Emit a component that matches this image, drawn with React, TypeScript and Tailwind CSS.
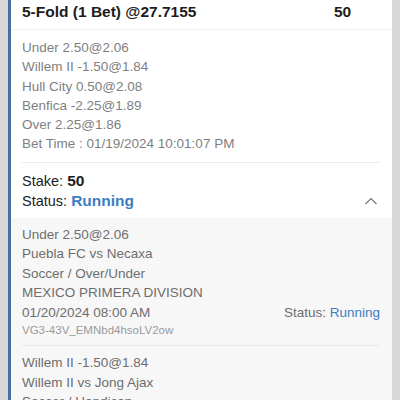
const summary = [
  "Under 2.50@2.06",
  "Willem II -1.50@1.84",
  "Hull City 0.50@2.08",
  "Benfica -2.25@1.89",
  "Over 2.25@1.86",
  "Bet Time : 01/19/2024 10:01:07 PM",
];

const legs = [
  {
    pick: "Under 2.50@2.06",
    match: "Puebla FC vs Necaxa",
    market: "Soccer / Over/Under",
    league: "MEXICO PRIMERA DIVISION",
    time: "01/20/2024 08:00 AM",
    id: "VG3-43V_EMNbd4hsoLV2ow",
  },
  {
    pick: "Willem II -1.50@1.84",
    match: "Willem II vs Jong Ajax",
    market: "Soccer / Handicap",
    league: "NETHERLANDS EERSTE DIVISIE",
    time: "01/19/2024 08:00 PM",
    id: "VG3-43V_EMNbd4hsoLV2ow",
  },
];

export default function App() {
  return (
    <div
      className="flex h-[400px] w-[400px] overflow-hidden bg-[#d8d8d8] pl-[8px] pr-[8px]"
      style={{ fontFamily: '"Liberation Sans", Arial, sans-serif' }}
    >
      <div className="flex-1 border-l-[3px] border-[#46719f] bg-white">
        {/* header */}
        <div className="flex items-center justify-between border-b border-[#f0f0f0] pl-[11px] pr-[12px] pt-[2px] pb-[7px] text-[15.5px] font-bold leading-[20px] text-[#1c1c1c]">
          <span>5-Fold (1 Bet) @27.7155</span>
          <span className="w-[46px]">50</span>
        </div>

        {/* summary */}
        <div className="pl-[11px] pr-[12px]">
          <div className="border-b border-[#ececec] pt-[8px] pb-[8px] text-[13.5px] leading-[19.3px] text-[#7f7f7f]">
            {summary.map((s) => (
              <div key={s}>{s}</div>
            ))}
          </div>
          <div className="flex items-end justify-between pt-[8px] pb-[7px] text-[14.5px] leading-[20px] text-[#1c1c1c]">
            <div>
              <div>
                Stake: <span className="text-[15.5px] font-bold">50</span>
              </div>
              <div>
                Status: <span className="text-[15.5px] font-bold text-[#3b7dc3]">Running</span>
              </div>
            </div>
            <svg width="14" height="10" viewBox="0 0 14 10" className="mb-[5px] mr-[2px]">
              <polyline points="1.5,8 7,2.5 12.5,8" fill="none" stroke="#777" strokeWidth="1.2" />
            </svg>
          </div>
        </div>

        {/* legs */}
        <div className="bg-[#f7f7f7] pl-[11px] pr-[12px]">
          {legs.map((leg) => (
            <div
              key={leg.pick}
              className="border-b border-[#e8e8e8] pt-[7px] pb-[6px] text-[13.5px] leading-[19.5px] text-[#6e6e6e]"
            >
              <div>{leg.pick}</div>
              <div>{leg.match}</div>
              <div>{leg.market}</div>
              <div>{leg.league}</div>
              <div className="flex justify-between">
                <span>{leg.time}</span>
                <span>
                  Status: <span className="text-[#3b7dc3]">Running</span>
                </span>
              </div>
              <div className="text-[11.5px] leading-[17px] text-[#9a9a9a]">{leg.id}</div>
            </div>
          ))}
        </div>
      </div>
    </div>
  );
}
